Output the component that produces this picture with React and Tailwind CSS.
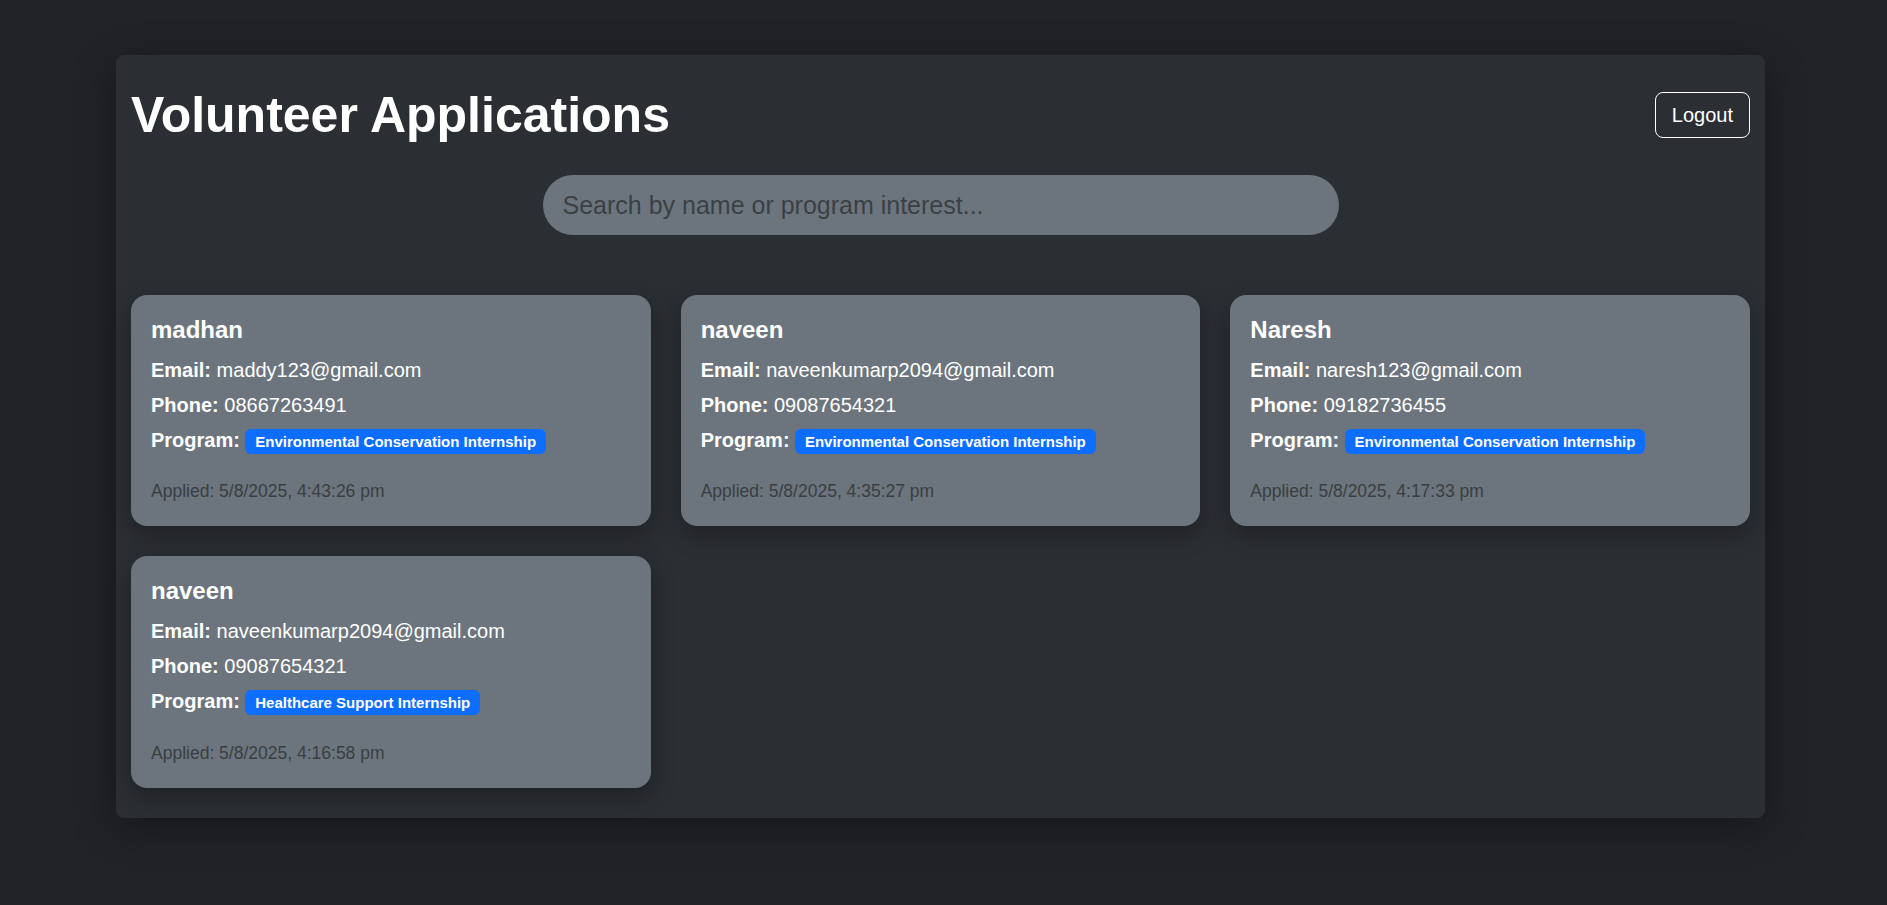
// Volunteer applications admin view

const applications = [
  {
    name: 'madhan',
    email: 'maddy123@gmail.com',
    phone: '08667263491',
    program: 'Environmental Conservation Internship',
    applied: '5/8/2025, 4:43:26 pm',
  },
  {
    name: 'naveen',
    email: 'naveenkumarp2094@gmail.com',
    phone: '09087654321',
    program: 'Environmental Conservation Internship',
    applied: '5/8/2025, 4:35:27 pm',
  },
  {
    name: 'Naresh',
    email: 'naresh123@gmail.com',
    phone: '09182736455',
    program: 'Environmental Conservation Internship',
    applied: '5/8/2025, 4:17:33 pm',
  },
  {
    name: 'naveen',
    email: 'naveenkumarp2094@gmail.com',
    phone: '09087654321',
    program: 'Healthcare Support Internship',
    applied: '5/8/2025, 4:16:58 pm',
  },
]

function ApplicationCard({ app }) {
  return (
    <div className="bg-[#6c757d] rounded-2xl px-5 pt-[21px] pb-5 text-white shadow-[0_8px_24px_rgba(0,0,0,0.3)]">
      <h4 className="text-[24px] font-bold leading-[1.2] mb-[10px]">{app.name}</h4>
      <p className="text-[20px] leading-[30px] mb-[5px]">
        <span className="font-bold">Email:</span> {app.email}
      </p>
      <p className="text-[20px] leading-[30px] mb-[5px]">
        <span className="font-bold">Phone:</span> {app.phone}
      </p>
      <p className="text-[20px] leading-[30px]">
        <span className="font-bold">Program:</span>{' '}
        <span className="inline-block bg-[#0d6efd] text-white text-[15px] font-bold leading-none px-[9.75px] py-[5.25px] rounded-md">
          {app.program}
        </span>
      </p>
      <p className="text-[20px] leading-[30px] mt-[20.6px]">
        <small className="text-[17.5px] text-[#3a3e43]">Applied: {app.applied}</small>
      </p>
    </div>
  )
}

export default function App() {
  return (
    <div className="min-h-[905px] bg-[#212327] pt-[55px] font-['Liberation_Sans',Arial,sans-serif]">
      <div className="ml-[116px] w-[1649px] bg-[#2b2e33] rounded-lg px-[15px] pt-[30px] pb-[30px] shadow-[0_10px_40px_rgba(0,0,0,0.35)]">
        {/* Cabecera */}
        <div className="flex items-center justify-between">
          <h1 className="text-[50px] font-bold leading-[1.2] text-white">Volunteer Applications</h1>
          <button className="border border-white rounded-lg px-4 py-[7px] text-[20px] leading-[1.5] text-white">
            Logout
          </button>
        </div>

        {/* Buscador */}
        <div className="flex justify-center mt-[30px]">
          <input
            type="text"
            placeholder="Search by name or program interest..."
            className="w-[796px] h-[60px] rounded-full bg-[#6c757d] px-5 text-[25px] text-white placeholder:text-[#3b4045] outline-none"
          />
        </div>

        {/* Tarjetas */}
        <div className="grid grid-cols-3 gap-[30px] mt-[60px]">
          {applications.map((app, i) => (
            <ApplicationCard key={i} app={app} />
          ))}
        </div>
      </div>
    </div>
  )
}
